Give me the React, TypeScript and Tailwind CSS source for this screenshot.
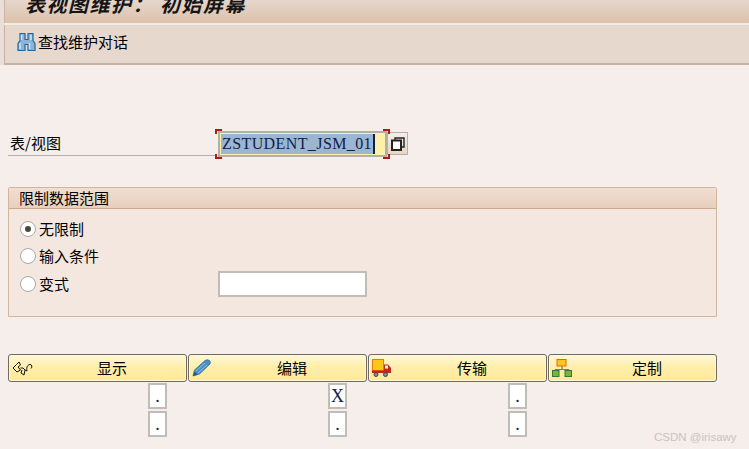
const cjk = { fontFamily: '"Noto Sans CJK SC", sans-serif' };
const serif = { fontFamily: '"Liberation Serif", serif' };

function Binoculars() {
  return (
    <svg width="19" height="20" viewBox="0 0 19 20" className="shrink-0">
      <path d="M3 1.5h5v6h3v-6h5v7l2 3v7h-7v-6H8v6H1v-7l2-3z" fill="#8db4d8" stroke="#1f6a9c" strokeWidth="1.2" />
      <path d="M4.5 3v5M14 3v5M3 11v6M12.5 11v6" stroke="#d4e5f3" strokeWidth="1.4" />
    </svg>
  );
}

function Glasses() {
  return (
    <svg width="21" height="16" viewBox="0 0 21 16" fill="none" stroke="#111" strokeWidth="1">
      <path d="M1 8 L4.5 4.5 L7 2 L8.5 5 L6 7 L8.5 10 L5 12 Z" />
      <path d="M8.5 8 L11 8 L13 10 L12 15 L9 13 L10 10" />
      <path d="M13 10 L15 11 C14 7 16 4.5 18 4.5 C20 4.5 20.5 7 19 8.5" />
    </svg>
  );
}

function Pencil() {
  return (
    <svg width="20" height="18" viewBox="0 0 20 18">
      <path d="M1 17 L2.5 11 L13 1.5 Q15 0 17.5 1.5 Q19 3.5 18 5 L7.5 15 Z" fill="#4d8dc2" stroke="#2f6ea3" strokeWidth="0.8" />
      <path d="M4 12 L13 4 M6 14 L15 6" stroke="#8fbde0" strokeWidth="1" />
      <path d="M1 17 L2.5 12.5 L5.5 15.5 Z" fill="#245a86" />
    </svg>
  );
}

function Truck() {
  return (
    <svg width="20" height="18" viewBox="0 0 20 18">
      <rect x="0.5" y="0.5" width="11" height="11" fill="#ffc61a" stroke="#e07a1c" />
      <path d="M0 11.5h12V5.5h4l3 3.5v5H0z" fill="#c0271d" />
      <rect x="13" y="6.5" width="3" height="3" fill="#fff" />
      <circle cx="4" cy="15.5" r="2" fill="#8b8b8b" stroke="#444" />
      <circle cx="13.5" cy="15.5" r="2" fill="#8b8b8b" stroke="#444" />
    </svg>
  );
}

function Hierarchy() {
  return (
    <svg width="20" height="18" viewBox="0 0 20 18">
      <path d="M10 7v3.5M3.5 12v-1.5h13V12" fill="none" stroke="#777" strokeWidth="1.2" />
      <rect x="5" y="0.5" width="9" height="6.5" fill="#ffc61a" stroke="#e0651c" />
      <rect x="0.5" y="11.5" width="6.5" height="6" fill="#79b23c" stroke="#2f7a3a" />
      <rect x="13" y="11.5" width="6.5" height="6" fill="#79b23c" stroke="#2f7a3a" />
    </svg>
  );
}

function Radio({ on, label }: { on?: boolean; label: string }) {
  return (
    <div className="flex items-center gap-[3px] h-[18px] text-[15px] text-black">
      <span className="w-[16px] h-[16px] rounded-full border border-[#a9a9a9] bg-white flex items-center justify-center">
        {on && <span className="w-[6px] h-[6px] rounded-full bg-[#444a36]" />}
      </span>
      <span>{label}</span>
    </div>
  );
}

function ActionButton({ icon, label, width, labelShift }: { icon: React.ReactNode; label: string; width: string; labelShift: string }) {
  return (
    <div className={`${width} h-[28px] rounded-[3px] border border-[#6f6a62] shadow-[inset_0_0_0_1px_#fff9e0] bg-gradient-to-b from-[#fff8d8] via-[#ffeea8] to-[#ffe89a] flex items-center pl-[3px] text-[15px] text-black`}>
      <span className="w-[22px] flex items-center justify-start">{icon}</span>
      <span className={labelShift}>{label}</span>
    </div>
  );
}

function Cell({ text }: { text: string }) {
  return (
    <div className="w-[19px] h-[26px] bg-white border-2 border-[#c0bcb8] flex items-center justify-center text-[18px] text-[#10204a]" style={serif}>
      {text}
    </div>
  );
}

function CellColumn({ offset, top }: { offset: string; top: string }) {
  return (
    <div className={`${offset} flex flex-col gap-[2px]`}>
      <Cell text={top} />
      <Cell text="." />
    </div>
  );
}

function Corner({ cls }: { cls: string }) {
  return <span className={`absolute w-[7px] h-[5px] border-[#b01818] ${cls}`} />;
}

export default function App() {
  return (
    <div className="relative w-[749px] h-[449px] overflow-hidden bg-[#f5eeea]" style={cjk}>
      <div className="pl-[4px] bg-[#e9dfd8]">
        <div className="h-[23px] overflow-hidden bg-gradient-to-b from-[#e6d6cc] to-[#dcc1aa] pl-[20px] border-l border-[#c9b5a6]">
          <div className="-mt-[9px] text-[20px] leading-[26px] font-bold italic text-[#151515] tracking-[1.5px] whitespace-nowrap" style={{ fontFamily: '"Noto Sans CJK SC", serif' }}>
            表视图维护： 初始屏幕
          </div>
        </div>
        <div className="h-[2px] bg-[#f3ebe5]" />
        <div className="h-[40px] bg-[#e7d8cd] border-b-2 border-l border-[#c6b0a2] flex items-center pl-[12px] pb-[4px] gap-[2px] text-[15px] text-black">
          <Binoculars />
          <span>查找维护对话</span>
        </div>
      </div>

      <div className="pl-[8px] pr-[32px] pt-[64px]">
        <div className="flex items-end h-[27px]">
          <div className="w-[207px] h-[25px] border-b border-[#b3aeaa] pl-[2px] text-[15px] leading-[24px] text-black">表/视图</div>
          <div className="relative ml-[3px] w-[169px] h-[26px] border-2 border-[#b0b0a8] bg-[#fff0a8] pl-[1px] pt-[1px] -mb-px">
            <Corner cls="-left-[5px] -top-[4px] border-l-2 border-t-2" />
            <Corner cls="-right-[5px] -top-[4px] border-r-2 border-t-2" />
            <Corner cls="-left-[5px] -bottom-[4px] border-l-2 border-b-2" />
            <Corner cls="-right-[5px] -bottom-[4px] border-r-2 border-b-2" />
            <div className="flex items-center h-[20px]">
              <span className="bg-[#9cb6d2] text-[#10204a] text-[16px] leading-[20px] tracking-[0.4px] pl-[1px] pr-[1px] whitespace-nowrap" style={serif}>ZSTUDENT_JSM_01</span>
              <span className="w-[2px] h-[20px] bg-[#10204a]" />
            </div>
          </div>
          <div className="mb-[1px] w-[21px] h-[23px] border border-[#b8b0a8] bg-gradient-to-b from-[#f5eee8] to-[#e6d6c4] flex items-center justify-center">
            <svg width="14" height="14" viewBox="0 0 14 14" fill="none" stroke="#222" strokeWidth="1.4">
              <path d="M4 3V1h9v9h-2" />
              <rect x="1" y="3.5" width="9" height="9.5" fill="#fff" strokeWidth="2" />
            </svg>
          </div>
        </div>

        <div className="mt-[31px] w-[709px] h-[130px] border border-[#d3b49c] rounded-t-[2px] bg-[#f4e7df]">
          <div className="h-[21px] border-b border-[#cda98e] bg-gradient-to-b from-[#f0dfd4] to-[#e8cfbd] pl-[10px] text-[15px] leading-[20px] text-black">限制数据范围</div>
          <div className="pl-[11px] pt-[11px] relative">
            <Radio on label="无限制" />
            <div className="mt-[9px]"><Radio label="输入条件" /></div>
            <div className="mt-[6px] flex items-center">
              <div className="w-[198px]"><Radio label="变式" /></div>
              <div className="w-[149px] h-[26px] bg-white border-2 border-[#c0bcb8]" />
            </div>
          </div>
        </div>

        <div className="mt-[37px] flex gap-[1px] w-[709px]">
          <ActionButton icon={<Glasses />} label="显示" width="w-[179px]" labelShift="ml-[63px]" />
          <ActionButton icon={<Pencil />} label="编辑" width="w-[179px]" labelShift="ml-[63px]" />
          <ActionButton icon={<Truck />} label="传输" width="w-[179px]" labelShift="ml-[63px]" />
          <ActionButton icon={<Hierarchy />} label="定制" width="w-[169px]" labelShift="ml-[58px]" />
        </div>

        <div className="mt-[1px] flex">
          <CellColumn offset="ml-[140px]" top="." />
          <CellColumn offset="ml-[161px]" top="X" />
          <CellColumn offset="ml-[161px]" top="." />
        </div>
      </div>

      <div className="absolute left-[654px] top-[430px] text-[11.5px] leading-[14px] text-[#c8c4c1]" style={{ fontFamily: '"Liberation Sans", sans-serif' }}>CSDN @irisawy</div>
    </div>
  );
}
